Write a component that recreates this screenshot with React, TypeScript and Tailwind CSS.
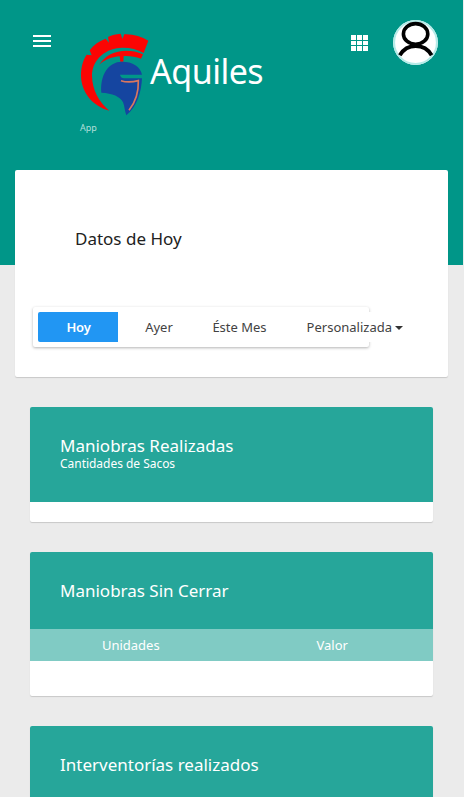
import React from 'react';

interface StatCardProps {
    title: string;
    subtitle?: string;
    columns?: string[];
    headerClass: string;
    bodyClass: string;
}

const ranges = [
    { label: 'Ayer', className: 'w-[82px]' },
    { label: 'Éste Mes', className: 'w-[79px]' },
];

const HelmetLogo: React.FC = () => (
    <svg className="h-[83px] w-[69px] shrink-0" viewBox="240 99 207 249" aria-hidden="true">
        <g fill="#fb0503">
            <path d="M328 332C280 320 243 278 243 226C243 202 249 179 260 164L275 166L269 151C281 134 298 123 317 116L327 128L324 111C336 105 348 102 362 101L367 117L373 103C400 102 424 109 445 122L431 159C409 147 385 142 359 144C310 148 276 184 276 228C277 270 296 306 328 332Z" />
            <path d="M298 194C322 155 377 141 429 163L423 176C407 170 389 167 371 168L370 185H361L359 169C335 171 314 179 298 194Z" />
        </g>
        <path
            fill="#1545a0"
            d="M304 278C300 226 324 185 366 185C398 185 421 199 426 224H360C361 230 365 234 372 235H426C424 275 412 320 379 346C374 333 374 319 369 307C361 289 337 280 304 278Z"
        />
        <path d="M363 242C380 248 399 246 415 242C416 272 408 304 387 331" stroke="#d9775f" strokeWidth="5" fill="none" />
    </svg>
);

const Avatar: React.FC = () => (
    <svg className="h-[46px] w-[46px]" viewBox="0 0 46 46" fill="none" aria-hidden="true">
        <circle cx="22.5" cy="22.5" r="22.4" fill="#fff" />
        <circle cx="22.5" cy="22.5" r="21.4" stroke="#b5ebe8" strokeWidth="2" />
        <ellipse cx="22.6" cy="13.9" rx="12.2" ry="10.3" stroke="#000" strokeWidth="3.6" />
        <path d="M6.8 35.3C10.5 29 15.5 26 22.7 26S35 29 38.6 35.3" stroke="#000" strokeWidth="3.8" />
    </svg>
);

const StatCard: React.FC<StatCardProps> = ({ title, subtitle, columns, headerClass, bodyClass }) => (
    <section className="overflow-hidden rounded-[2px] bg-white shadow-[0_1px_1px_rgba(0,0,0,0.15)]">
        <div className={`bg-[#26a69a] px-[30px] pt-[30px] text-white ${headerClass}`}>
            <h2 className="text-[17px] leading-[18px]">{title}</h2>
            {subtitle && <p className="text-[12px] leading-[17px] tracking-[-0.03px]">{subtitle}</p>}
        </div>
        {columns && (
            <div className="grid h-8 grid-cols-2 items-center bg-[#80cbc4] pt-px text-center text-[13px] text-white">
                {columns.map((column) => (
                    <span key={column}>{column}</span>
                ))}
            </div>
        )}
        <div className={bodyClass} />
    </section>
);

const App: React.FC = () => {
    return (
        <div className="h-[797px] overflow-hidden bg-[#ebebeb] font-['Noto_Sans',sans-serif]">
            <header className="mr-px flex h-[265px] items-start bg-[#009688] text-white">
                <button aria-label="Menu" className="mt-[35px] ml-[33px] flex w-[18px] flex-col gap-[3px]">
                    <span className="h-[2px] bg-white" />
                    <span className="h-[2px] bg-white" />
                    <span className="h-[2px] bg-white" />
                </button>
                <div className="mt-[33px] ml-[29px]">
                    <div className="flex">
                        <HelmetLogo />
                        <h1 className="mt-[15px] ml-px text-[34px] leading-[46px] tracking-[-0.5px]">Aquiles</h1>
                    </div>
                    <p className="mt-[5px] text-[9px] leading-[13px] text-white/70">App</p>
                </div>
                <div className="mt-[35px] mr-[25px] ml-auto grid grid-cols-3 gap-px">
                    {Array.from({ length: 9 }, (_, i) => (
                        <span key={i} className="h-[4.67px] w-[5px] bg-white" />
                    ))}
                </div>
                <div className="mt-[20px] mr-[24px]">
                    <Avatar />
                </div>
            </header>

            <main className="relative -mt-[95px] pr-4 pl-[15px]">
                <section className="h-[207px] rounded-[2px] bg-white pt-[57px] pl-[18px] text-[#212121] shadow-[0_1px_1px_rgba(0,0,0,0.15)]">
                    <h2 className="pl-[42px] text-[17px] leading-6">Datos de Hoy</h2>
                    <div className="mt-[56px] flex h-10 w-[336px] items-center rounded-[2px] pl-[5px] text-[13px] text-[#424242] shadow-[0_1px_3px_rgba(0,0,0,0.3)]">
                        <button className="h-[30px] w-20 shrink-0 rounded-l-[2px] bg-[#2196f3] pt-px pl-px font-semibold tracking-[-0.2px] text-white">
                            Hoy
                        </button>
                        {ranges.map((range) => (
                            <button key={range.label} className={`h-[30px] shrink-0 pt-px ${range.className}`}>
                                {range.label}
                            </button>
                        ))}
                        <button className="flex h-[30px] w-[124px] shrink-0 items-center justify-end bg-white pt-px whitespace-nowrap">
                            Personalizada
                            <span className="ml-[3px] border-x-4 border-t-4 border-x-transparent border-t-[#333]" />
                        </button>
                    </div>
                </section>

                <div className="mt-[30px] flex flex-col gap-[30px] px-[15px]">
                    <StatCard title="Maniobras Realizadas" subtitle="Cantidades de Sacos" headerClass="h-[95px]" bodyClass="h-5" />
                    <StatCard title="Maniobras Sin Cerrar" columns={['Unidades', 'Valor']} headerClass="h-[77px]" bodyClass="h-[35px]" />
                    <StatCard title="Interventorías realizados" headerClass="h-[77px]" bodyClass="h-[35px]" />
                </div>
            </main>
        </div>
    );
};

export default App;
